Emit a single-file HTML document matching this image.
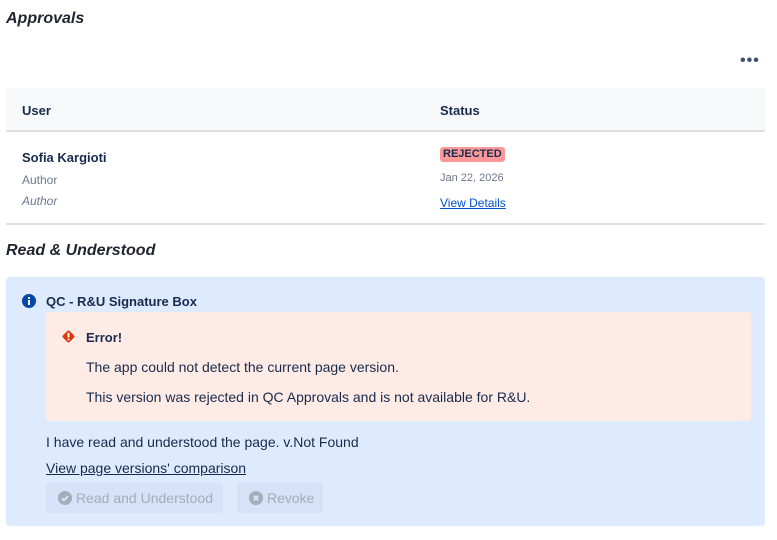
<!DOCTYPE html>
<html><head><meta charset="utf-8"><style>
*{margin:0;padding:0;box-sizing:border-box}
body{width:777px;height:540px;background:#fff;font-family:"Liberation Sans",sans-serif;color:#172b4d;position:relative;overflow:hidden}
.a{position:absolute;white-space:nowrap}
h2{position:absolute;font-size:16px;font-style:italic;font-weight:bold;color:#1e2430}
.hdr{position:absolute;left:6px;top:88px;width:759px;height:44px;background:#f7f8f9;border-bottom:2px solid #dfe1e6}
.th{font-size:13px;font-weight:bold;color:#172b4d}
.sep{position:absolute;left:6px;top:223px;width:759px;height:2px;background:#dfe1e6}
.blue{position:absolute;left:6px;top:277px;width:759px;height:249px;background:#deebff;border-radius:3px}
.err{position:absolute;left:46px;top:312px;width:705px;height:109px;background:#ffebe6;border-radius:3px}
.btn{position:absolute;top:483px;height:30px;background:rgba(9,30,66,0.04);border-radius:3px;color:#a5adba;font-size:14px;line-height:30px;padding-left:12px}
.t{font-size:14px;color:#42526e}
</style></head><body>
<h2 style="left:6px;top:10px">Approvals</h2>
<div class="a" style="left:740px;top:52px;font-size:16px;font-weight:bold;color:#42526e;letter-spacing:1px">•••</div>
<div class="hdr"></div>
<div class="a th" style="left:22px;top:103px">User</div>
<div class="a th" style="left:440px;top:103px">Status</div>
<div class="a" style="left:22px;top:150px;font-size:13px;font-weight:bold">Sofia Kargioti</div>
<div class="a" style="left:22px;top:173px;font-size:12px;color:#6b778c">Author</div>
<div class="a" style="left:22px;top:194px;font-size:12px;color:#6b778c;font-style:italic">Author</div>
<div class="a" style="left:440px;top:147px;height:15px;padding:0 3px;background:#f99;border-radius:3px;font-size:11px;font-weight:bold;line-height:15px;color:#172b4d">REJECTED</div>
<div class="a" style="left:440px;top:172px;font-size:11px;color:#6b778c">Jan 22, 2026</div>
<div class="a" style="left:440px;top:196px;font-size:12px;color:#0052cc;text-decoration:underline">View Details</div>
<div class="sep"></div>
<h2 style="left:6px;top:242px">Read &amp; Understood</h2>
<div class="blue"></div>
<svg class="a" style="left:22px;top:294px" width="14" height="14" viewBox="0 0 14 14"><circle cx="7" cy="7" r="7" fill="#0747a6"/><rect x="6" y="6" width="2" height="5" fill="#fff"/><circle cx="7" cy="4" r="1.1" fill="#fff"/></svg>
<div class="a" style="left:46px;top:294px;font-size:13px;font-weight:bold;color:#172b4d">QC - R&amp;U Signature Box</div>
<div class="err"></div>
<svg class="a" style="left:61px;top:329px" width="15" height="15" viewBox="0 0 16 16"><rect x="3" y="3" width="10" height="10" rx="2" transform="rotate(45 8 8)" fill="#de350b"/><rect x="7" y="4" width="2" height="5" fill="#fff"/><circle cx="8" cy="11.2" r="1.1" fill="#fff"/></svg>
<div class="a" style="left:86px;top:330px;font-size:13px;font-weight:bold">Error!</div>
<div class="a t" style="left:86px;top:359px;color:#172b4d">The app could not detect the current page version.</div>
<div class="a t" style="left:86px;top:389px;color:#172b4d">This version was rejected in QC Approvals and is not available for R&amp;U.</div>
<div class="a" style="left:46px;top:434px;font-size:14px;color:#172b4d">I have read and understood the page. v.Not Found</div>
<div class="a" style="left:46px;top:460px;font-size:14px;color:#172b4d;text-decoration:underline">View page versions' comparison</div>
<div class="btn" style="left:46px;width:177px"><svg width="14" height="14" viewBox="0 0 14 14" style="vertical-align:-2px;margin-right:4px"><circle cx="7" cy="7" r="7" fill="#a5adba"/><path d="M4 7.2l2 2 4-4" stroke="#deebff" stroke-width="1.8" fill="none"/></svg>Read and Understood</div>
<div class="btn" style="left:237px;width:86px"><svg width="14" height="14" viewBox="0 0 14 14" style="vertical-align:-2px;margin-right:4px"><circle cx="7" cy="7" r="7" fill="#a5adba"/><path d="M4.8 4.8l4.4 4.4M9.2 4.8l-4.4 4.4" stroke="#deebff" stroke-width="1.8"/></svg>Revoke</div>
</body></html>
